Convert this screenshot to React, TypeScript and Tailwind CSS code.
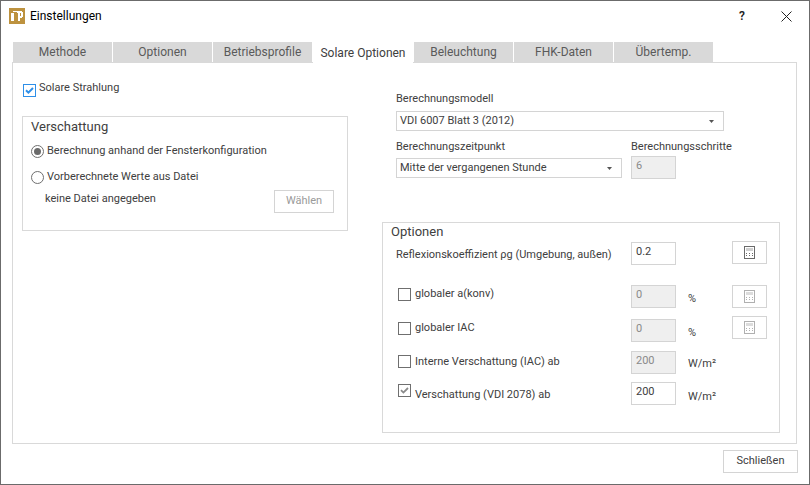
const TABS = ["Methode", "Optionen", "Betriebsprofile", "Solare Optionen", "Beleuchtung", "FHK-Daten", "Übertemp."];

function CalcIcon({ disabled }: { disabled?: boolean }) {
  const c = disabled ? "#b0b0b0" : "#6a6a6a";
  const f = disabled ? "#dcdcdc" : "#d0d0d0";
  return (
    <svg width="11" height="13" viewBox="0 0 11 13" shapeRendering="crispEdges">
      <rect x="0.5" y="0.5" width="10" height="12" fill="white" stroke={c} />
      <rect x="2" y="2" width="7" height="3" fill={f} />
      {[2, 5, 8].map((x) =>
        [7, 9].map((y) => <rect key={`${x}-${y}`} x={x} y={y} width="1" height="1" fill={c} />)
      )}
    </svg>
  );
}

function CalcButton({ disabled }: { disabled?: boolean }) {
  return (
    <div className="flex h-[23px] w-[35px] items-center justify-center border border-[#d4d4d4] bg-white">
      <CalcIcon disabled={disabled} />
    </div>
  );
}

function Check({ checked }: { checked?: boolean }) {
  return (
    <div className="flex h-[13px] w-[13px] shrink-0 items-center justify-center border border-[#6f6f6f] bg-white">
      {checked && (
        <svg width="9" height="7" viewBox="0 0 9 7">
          <path d="M1 3.2 L3.4 5.6 L8 1" fill="none" stroke="#8a8a8a" strokeWidth="1.8" />
        </svg>
      )}
    </div>
  );
}

function Radio({ checked }: { checked?: boolean }) {
  return (
    <div className="flex h-[13px] w-[13px] shrink-0 items-center justify-center rounded-full border border-[#6f6f6f] bg-white">
      {checked && <div className="h-[7px] w-[7px] rounded-full bg-[#6a6a6a]" />}
    </div>
  );
}

function Select({ value, width }: { value: string; width: string }) {
  return (
    <div className={`flex h-[20px] items-center justify-between border border-[#d4d4d4] bg-white pl-[3px] pr-[9px] ${width}`}>
      <span className="text-[#404040]">{value}</span>
      <svg width="5" height="3" viewBox="0 0 5 3">
        <path d="M0 0 H5 L2.5 3 Z" fill="#555555" />
      </svg>
    </div>
  );
}

function Field({ value, disabled }: { value: string; disabled?: boolean }) {
  return (
    <div
      className={`h-[23px] w-[45px] border pl-[4px] leading-[17px] ${
        disabled ? "border-[#d4d4d4] bg-[#efefef] text-[#8a8a8a]" : "border-[#d4d4d4] bg-white text-[#404040]"
      }`}
    >
      {value}
    </div>
  );
}

function OptionRow({
  height,
  label,
  checked,
  boxTop,
  textTop,
  value,
  disabled,
  unit,
  unitTop,
  calcTop,
}: {
  height: string;
  label: string;
  checked?: boolean;
  boxTop: string;
  textTop: string;
  value: string;
  disabled?: boolean;
  unit: string;
  unitTop: string;
  calcTop?: string;
}) {
  return (
    <div className={`flex items-start ${height}`}>
      <div className="flex w-[248px] items-start gap-[4px] pl-[15px]">
        <div className={boxTop}>
          <Check checked={checked} />
        </div>
        <span className={`leading-[16px] ${textTop}`}>{label}</span>
      </div>
      <Field value={value} disabled={disabled} />
      <span className={`ml-[12px] w-[44px] leading-[16px] ${unitTop}`}>{unit}</span>
      {calcTop && (
        <div className={calcTop}>
          <CalcButton disabled />
        </div>
      )}
    </div>
  );
}

export default function App() {
  return (
    <div className="flex h-[485px] w-[810px] flex-col overflow-hidden border-[1px] border-[#6b6b6b] bg-white font-['Roboto',sans-serif] text-[11px] text-[#404040]">
      {/* Title bar */}
      <div className="flex h-[30px] shrink-0 items-center pl-[8px]">
        <svg width="16" height="16" viewBox="0 0 16 16" shapeRendering="crispEdges">
          <rect width="16" height="16" fill="#bd923f" />
          <path d="M2 5 H5 V13 H2 Z M4 3 H13 V4 H14 V9 H13 V10 H11 V13 H9 V5 H8 V4 H4 Z" fill="#ffffff" />
          <rect x="11" y="5" width="1" height="3" fill="#bd923f" />
        </svg>
        <span className="ml-[5px] text-[12px] text-black">Einstellungen</span>
        <span className="ml-auto mr-[36px] text-[12px] font-semibold text-[#222222]">?</span>
        <svg className="mr-[17px]" width="11" height="11" viewBox="0 0 11 11">
          <path d="M0.5 0.5 L10.5 10.5 M10.5 0.5 L0.5 10.5" stroke="#222222" strokeWidth="1" />
        </svg>
      </div>

      {/* Tabs */}
      <div className="ml-[12px] mt-[11px] flex h-[20px] shrink-0 items-end gap-px">
        {TABS.map((t) => {
          const active = t === "Solare Optionen";
          return (
            <div
              key={t}
              className={`relative flex w-[99px] items-center justify-center text-[12px] ${
                active ? "z-10 mb-[-1px] h-[19px] w-[100px] bg-white pb-[2px] text-[#404040]" : "h-[20px] bg-[#d9d9d9] text-[#5a5a5a]"
              }`}
            >
              {t}
            </div>
          );
        })}
      </div>

      {/* Panel */}
      <div className="ml-[11px] mr-[12px] flex h-[382px] shrink-0 border border-[#d9d9d9]">
        {/* Left column */}
        <div className="ml-[9px] flex w-[326px] flex-col">
          <div className="mt-[19px] flex h-[16px] items-center gap-[3px] pl-px">
            <div className="flex h-[13px] w-[13px] items-center justify-center border border-[#2e8fe8] bg-white">
              <svg width="9" height="7" viewBox="0 0 9 7">
                <path d="M1 3.2 L3.4 5.6 L8 1" fill="none" stroke="#2e8fe8" strokeWidth="2" />
              </svg>
            </div>
            <span className="mt-[-4px]">Solare Strahlung</span>
          </div>
          <div className="mt-[18px] flex h-[115px] flex-col border border-[#d9d9d9] pl-[8px]">
            <div className="mt-px text-[13px] leading-[18px]">Verschattung</div>
            <div className="mt-[7px] flex h-[16px] items-center gap-[3px]">
              <Radio checked />
              <span>Berechnung anhand der Fensterkonfiguration</span>
            </div>
            <div className="mt-[10px] flex h-[16px] items-center gap-[3px]">
              <Radio />
              <span>Vorberechnete Werte aus Datei</span>
            </div>
            <div className="mt-[5px] flex items-start">
              <span className="ml-[14px] mt-[1px]">keine Datei angegeben</span>
              <div className="ml-auto mr-[13px] flex h-[23px] w-[60px] items-center justify-center border border-[#d4d4d4] text-[#9a9a9a]">
                Wählen
              </div>
            </div>
          </div>
        </div>

        {/* Right column */}
        <div className="ml-[34px] flex w-[398px] flex-col">
          <div className="ml-[14px] mt-[28px] h-[16px] leading-[16px]">Berechnungsmodell</div>
          <div className="ml-[14px] mt-[4px]">
            <Select value="VDI 6007 Blatt 3 (2012)" width="w-[328px]" />
          </div>
          <div className="ml-[14px] mt-[8px] flex">
            <div className="w-[235px]">
              <div className="h-[16px] leading-[16px]">Berechnungszeitpunkt</div>
              <div className="mt-[3px]">
                <Select value="Mitte der vergangenen Stunde" width="w-[226px]" />
              </div>
            </div>
            <div>
              <div className="h-[16px] leading-[16px]">Berechnungsschritte</div>
              <div className="mt-px">
                <Field value="6" disabled />
              </div>
            </div>
          </div>

          <div className="mt-[43px] flex h-[211px] flex-col border border-[#d9d9d9]">
            <div className="ml-[8px] text-[13px] leading-[18px]">Optionen</div>
            <div className="mt-[1px] flex h-[43px] items-start">
              <div className="w-[248px] whitespace-nowrap pl-[13px] pt-[5px]">Reflexionskoeffizient ρg (Umgebung, außen)</div>
              <Field value="0.2" />
              <div className="ml-[56px] mt-[-1px]">
                <CalcButton />
              </div>
            </div>
            <OptionRow
              height="h-[34px]"
              label="globaler a(konv)"
              boxTop="mt-[3px]"
              textTop="mt-px"
              value="0"
              disabled
              unit="%"
              unitTop="mt-[6px]"
              calcTop="mt-0"
            />
            <OptionRow
              height="h-[32px]"
              label="globaler IAC"
              boxTop="mt-[3px]"
              textTop="mt-px"
              value="0"
              disabled
              unit="%"
              unitTop="mt-[6px]"
              calcTop="mt-[-3px]"
            />
            <OptionRow
              height="h-[31px]"
              label="Interne Verschattung (IAC) ab"
              boxTop="mt-[4px]"
              textTop="mt-[3px]"
              value="200"
              disabled
              unit="W/m²"
              unitTop="mt-[5px]"
            />
            <OptionRow
              height="h-[31px]"
              label="Verschattung (VDI 2078) ab"
              checked
              boxTop="mt-[2px]"
              textTop="mt-[5px]"
              value="200"
              unit="W/m²"
              unitTop="mt-[7px]"
            />
          </div>
        </div>
      </div>

      {/* Footer */}
      <div className="mr-[11px] mt-[6px] flex justify-end">
        <div className="flex h-[23px] w-[75px] items-center justify-center border border-[#d4d4d4] text-[#404040]">
          Schließen
        </div>
      </div>
    </div>
  );
}
